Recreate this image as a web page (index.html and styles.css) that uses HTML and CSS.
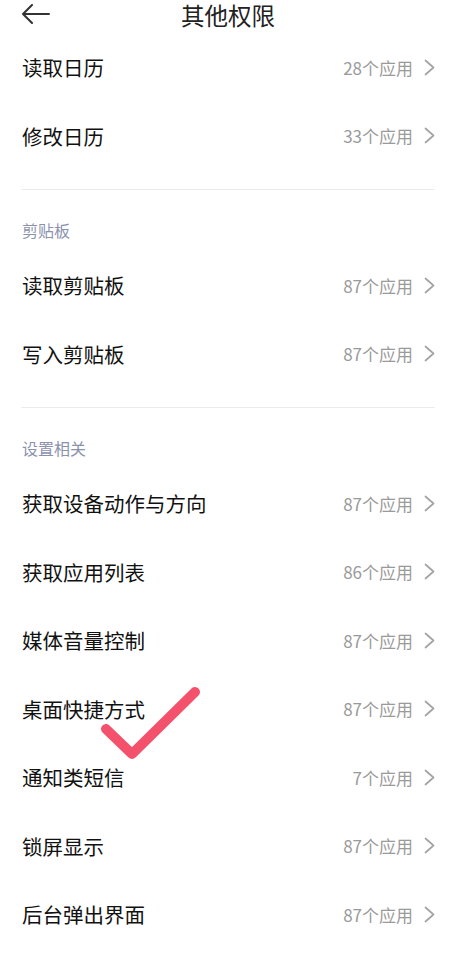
FILE: index.html
```html
<!DOCTYPE html>
<html lang="zh-CN">

<head>
    <meta charset="UTF-8">
    <meta name="viewport" content="width=device-width, initial-scale=1.0">
    <title>其他权限</title>
    <link rel="stylesheet" href="styles.css">
</head>

<body>
    <div class="topbar">
        <span class="back">
            <svg width="30" height="20" viewBox="0 0 30 20">
                <path d="M2 10 H28 M11 1 L2 10 L11 19" fill="none" stroke="#333" stroke-width="2"
                    stroke-linecap="round" stroke-linejoin="round" />
            </svg>
        </span>
        <span class="title">其他权限</span>
        <span></span>
    </div>

    <div class="group">
        <div class="row"><span class="name">读取日历</span><span class="count">28个应用</span><svg class="arrow" width="11" height="17" viewBox="0 0 11 17"><polyline points="1.5,1.5 9.5,8.5 1.5,15.5" /></svg></div>
        <div class="row"><span class="name">修改日历</span><span class="count">33个应用</span><svg class="arrow" width="11" height="17" viewBox="0 0 11 17"><polyline points="1.5,1.5 9.5,8.5 1.5,15.5" /></svg></div>
    </div>
    <div class="divider"></div>

    <div class="group-title">剪贴板</div>
    <div class="group">
        <div class="row"><span class="name">读取剪贴板</span><span class="count">87个应用</span><svg class="arrow" width="11" height="17" viewBox="0 0 11 17"><polyline points="1.5,1.5 9.5,8.5 1.5,15.5" /></svg></div>
        <div class="row"><span class="name">写入剪贴板</span><span class="count">87个应用</span><svg class="arrow" width="11" height="17" viewBox="0 0 11 17"><polyline points="1.5,1.5 9.5,8.5 1.5,15.5" /></svg></div>
    </div>
    <div class="divider"></div>

    <div class="group-title">设置相关</div>
    <div class="group">
        <div class="row"><span class="name">获取设备动作与方向</span><span class="count">87个应用</span><svg class="arrow" width="11" height="17" viewBox="0 0 11 17"><polyline points="1.5,1.5 9.5,8.5 1.5,15.5" /></svg></div>
        <div class="row"><span class="name">获取应用列表</span><span class="count">86个应用</span><svg class="arrow" width="11" height="17" viewBox="0 0 11 17"><polyline points="1.5,1.5 9.5,8.5 1.5,15.5" /></svg></div>
        <div class="row"><span class="name">媒体音量控制</span><span class="count">87个应用</span><svg class="arrow" width="11" height="17" viewBox="0 0 11 17"><polyline points="1.5,1.5 9.5,8.5 1.5,15.5" /></svg></div>
        <div class="row"><span class="name">桌面快捷方式</span><span class="count">87个应用</span><svg class="arrow" width="11" height="17" viewBox="0 0 11 17"><polyline points="1.5,1.5 9.5,8.5 1.5,15.5" /></svg></div>
        <div class="row"><span class="name">通知类短信</span><span class="count">7个应用</span><svg class="arrow" width="11" height="17" viewBox="0 0 11 17"><polyline points="1.5,1.5 9.5,8.5 1.5,15.5" /></svg></div>
        <div class="row"><span class="name">锁屏显示</span><span class="count">87个应用</span><svg class="arrow" width="11" height="17" viewBox="0 0 11 17"><polyline points="1.5,1.5 9.5,8.5 1.5,15.5" /></svg></div>
        <div class="row"><span class="name">后台弹出界面</span><span class="count">87个应用</span><svg class="arrow" width="11" height="17" viewBox="0 0 11 17"><polyline points="1.5,1.5 9.5,8.5 1.5,15.5" /></svg></div>
    </div>

    <!-- hand drawn check mark over the list -->
    <svg class="check" width="463" height="960" viewBox="0 0 463 960">
        <path d="M106 729 L132 754 L195 692" fill="none" stroke="#f4516c" stroke-width="10"
            stroke-linecap="round" stroke-linejoin="round" />
    </svg>
</body>

</html>
```

FILE: styles.css
```css
body {
    margin: 0;
    background-color: #fff;
    font-family: "Noto Sans CJK SC", "Noto Sans", sans-serif;
    color: #111;
    position: relative;
    overflow: hidden;
}

.topbar {
    height: 33px;
    display: grid;
    grid-template-columns: 1fr auto 1fr;
    align-items: start;
    padding-right: 7px;
}

.back {
    padding: 4px 0 0 21px;
    height: 20px;
}

.back svg {
    display: block;
}

.title {
    font-size: 23.5px;
    line-height: 28px;
    padding-top: 1px;
    color: #222;
}

.row {
    height: 68.5px;
    display: flex;
    align-items: center;
    padding: 0 28px 0 22px;
}

.name {
    flex: 1;
    font-size: 20.5px;
}

.count {
    font-size: 17px;
    color: #9a9a9a;
    margin-right: 11px;
}

.arrow {
    display: block;
    fill: none;
    stroke: #a3a3a3;
    stroke-width: 1.7;
    stroke-linecap: round;
    stroke-linejoin: round;
}

.divider {
    height: 1px;
    background-color: #ececec;
    margin: 19px 28px 0 21px;
}

.group-title {
    font-size: 16px;
    line-height: 22px;
    color: #8c92ae;
    padding: 29px 22px 10px;
}

.check {
    position: absolute;
    left: 0;
    top: 0;
    pointer-events: none;
}
```
